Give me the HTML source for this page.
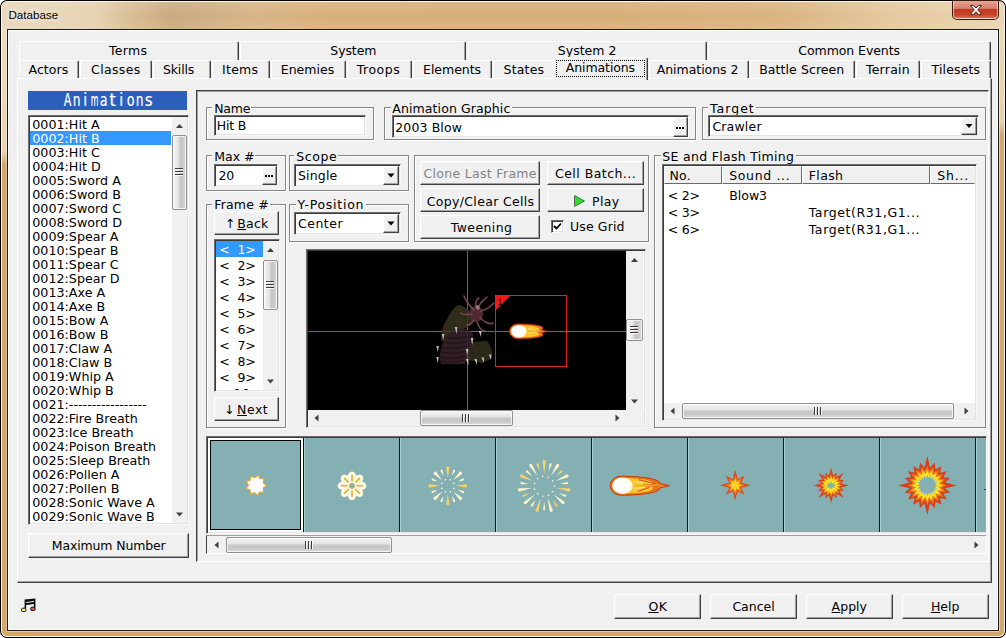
<!DOCTYPE html><html><head><meta charset="utf-8"><title>Database</title><style>
*{box-sizing:border-box;margin:0;padding:0}
html,body{width:1006px;height:638px;overflow:hidden;background:#fff}
body{font-family:"DejaVu Sans","Liberation Sans",sans-serif;font-size:12.5px;color:#000;position:relative}
.a{position:absolute}
.t{position:absolute;white-space:pre;line-height:16px;height:16px}
.btn{position:absolute;background:#f0f0f0;border:1px solid;border-color:#fff #404040 #404040 #fff;box-shadow:inset -1px -1px 0 #a0a0a0,inset 1px 1px 0 #f4f4f4}
.sunk{position:absolute;background:#fff;border:1px solid;border-color:#6e6e6e #f8f8f8 #f8f8f8 #6e6e6e;box-shadow:inset 1px 1px 0 #3a3a3a,inset -1px -1px 0 #e3e3e3}
.grp{position:absolute;border:1px solid #868686;box-shadow:1px 1px 0 #fff,inset 1px 1px 0 #fff}
.gl{position:absolute;background:#f0f0f0;height:12px}
.sb{position:absolute;background:#f0f0f0}
.thumbv{position:absolute;border:1px solid #8f8f8f;border-radius:2px;background:linear-gradient(90deg,#f5f5f5 0%,#e4e4e4 40%,#c6c6c6 55%,#c9c9c9 75%,#dcdcdc 100%);box-shadow:inset 0 0 0 1px rgba(255,255,255,.7)}
.thumbh{position:absolute;border:1px solid #8f8f8f;border-radius:2px;background:linear-gradient(180deg,#f5f5f5 0%,#e4e4e4 40%,#c6c6c6 55%,#c9c9c9 75%,#dcdcdc 100%);box-shadow:inset 0 0 0 1px rgba(255,255,255,.7)}
u{text-decoration:underline;text-underline-offset:1px}
</style></head><body>
<div class="a" style="left:0px;top:0px;width:1006px;height:638px;background:#000;border-radius:7px"></div>
<div class="a" style="left:1px;top:1px;width:1004px;height:636px;border-radius:6px;background:#fff6e8"></div>
<div class="a" style="left:2px;top:2px;width:1002px;height:634px;border-radius:5px;background:#d4a66a"></div>
<div class="a" style="left:2px;top:2px;width:1002px;height:28px;border-radius:5px 5px 0 0;background:linear-gradient(90deg,#e9d8bd 0%,#e7d3b4 9%,#d9be96 13%,#cbab80 17%,#d2b085 21%,#d9b689 25%,#d9b07a 33%,#d8af79 60%,#dbb582 78%,#e4c89f 88%,#e8d0ab 95%,#ebd6b6 100%)"></div>
<div class="a" style="left:2px;top:2px;width:1002px;height:28px;border-radius:5px 5px 0 0;background:linear-gradient(180deg,rgba(255,255,255,.10) 0%,rgba(255,255,255,.0) 45%,rgba(255,255,255,0) 60%,rgba(255,240,220,.10) 100%)"></div>
<div class="a" style="left:2px;top:30px;width:5px;height:135px;background:linear-gradient(180deg,#ecdcc2 0%,#e9d4b6 90%,#d4a66a 100%)"></div>
<div class="a" style="left:999px;top:30px;width:5px;height:105px;background:linear-gradient(180deg,#ecd8b8 0%,#e8d0ac 88%,#d4a66a 100%)"></div>
<div class="a" style="left:6px;top:30px;width:1px;height:601px;background:rgba(255,255,255,.35)"></div>
<div class="a" style="left:999px;top:30px;width:1px;height:601px;background:rgba(255,255,255,.45)"></div>
<div class="a" style="left:7px;top:631px;width:992px;height:1px;background:rgba(255,255,255,.45)"></div>
<div class="a" style="left:7px;top:29px;width:992px;height:602px;background:#1a1a1a"></div>
<div class="a" style="left:8px;top:30px;width:990px;height:600px;background:#f0f0f0;border:1px solid #fff"></div>
<div class="t" style="left:8.5px;top:7px;font-family:'Liberation Sans',sans-serif;font-size:11.6px;text-shadow:0 0 5px rgba(255,255,255,.9),0 0 8px rgba(255,255,255,.7)">Database</div>
<div class="a" style="left:952px;top:0px;width:47px;height:20px;background:#3a1a10;border-radius:0 0 5px 5px"></div>
<div class="a" style="left:953px;top:1px;width:45px;height:18px;border-radius:0 0 4px 4px;border:1px solid rgba(255,255,255,.55);border-top:none;background:linear-gradient(180deg,#e6a695 0%,#d8796a 45%,#c3391d 50%,#c8452a 80%,#d9694a 100%)"></div>
<svg class="a" style="left:968px;top:4px" width="16" height="12" viewBox="0 0 16 12"><path d="M2.5 1.5 L5.5 1.5 L8 4 L10.5 1.5 L13.5 1.5 L9.7 5.8 L13.7 10.5 L10.5 10.5 L8 7.7 L5.5 10.5 L2.3 10.5 L6.3 5.8 Z" fill="#fff" stroke="#5a2a20" stroke-width="1" stroke-linejoin="round"/></svg>
<div class="a" style="left:19px;top:41px;width:220px;height:19px;border-top:1px solid #fff;border-left:1px solid #fff;border-right:1px solid #404040;box-shadow:inset -1px 0 0 #a0a0a0;border-radius:2px 2px 0 0;"></div>
<div class="t" style="left:109.1px;top:43px;letter-spacing:0.26px;">Terms</div>
<div class="a" style="left:240px;top:41px;width:226px;height:19px;border-top:1px solid #fff;border-left:1px solid #fff;border-right:1px solid #404040;box-shadow:inset -1px 0 0 #a0a0a0;border-radius:2px 2px 0 0;"></div>
<div class="t" style="left:330.3px;top:43px;letter-spacing:-0.09px;">System</div>
<div class="a" style="left:468px;top:41px;width:239px;height:19px;border-top:1px solid #fff;border-left:1px solid #fff;border-right:1px solid #404040;box-shadow:inset -1px 0 0 #a0a0a0;border-radius:2px 2px 0 0;"></div>
<div class="t" style="left:557.8px;top:43px;">System 2</div>
<div class="a" style="left:708px;top:41px;width:283px;height:19px;border-top:1px solid #fff;border-left:1px solid #fff;border-right:1px solid #404040;box-shadow:inset -1px 0 0 #a0a0a0;border-radius:2px 2px 0 0;"></div>
<div class="t" style="left:798.3px;top:43px;letter-spacing:-0.07px;">Common Events</div>
<div class="a" style="left:19px;top:60px;width:60px;height:19px;border-top:1px solid #fff;border-left:1px solid #fff;border-right:1px solid #404040;box-shadow:inset -1px 0 0 #a0a0a0;border-radius:2px 2px 0 0;"></div>
<div class="t" style="left:28.5px;top:62px;letter-spacing:0.07px;">Actors</div>
<div class="a" style="left:80px;top:60px;width:72px;height:19px;border-top:1px solid #fff;border-left:1px solid #fff;border-right:1px solid #404040;box-shadow:inset -1px 0 0 #a0a0a0;border-radius:2px 2px 0 0;"></div>
<div class="t" style="left:91.1px;top:62px;letter-spacing:0.33px;">Classes</div>
<div class="a" style="left:153px;top:60px;width:58px;height:19px;border-top:1px solid #fff;border-left:1px solid #fff;border-right:1px solid #404040;box-shadow:inset -1px 0 0 #a0a0a0;border-radius:2px 2px 0 0;"></div>
<div class="t" style="left:163.0px;top:62px;letter-spacing:-0.17px;">Skills</div>
<div class="a" style="left:212px;top:60px;width:58px;height:19px;border-top:1px solid #fff;border-left:1px solid #fff;border-right:1px solid #404040;box-shadow:inset -1px 0 0 #a0a0a0;border-radius:2px 2px 0 0;"></div>
<div class="t" style="left:222.1px;top:62px;letter-spacing:0.23px;">Items</div>
<div class="a" style="left:271px;top:60px;width:75px;height:19px;border-top:1px solid #fff;border-left:1px solid #fff;border-right:1px solid #404040;box-shadow:inset -1px 0 0 #a0a0a0;border-radius:2px 2px 0 0;"></div>
<div class="t" style="left:280.7px;top:62px;letter-spacing:0.05px;">Enemies</div>
<div class="a" style="left:347px;top:60px;width:65px;height:19px;border-top:1px solid #fff;border-left:1px solid #fff;border-right:1px solid #404040;box-shadow:inset -1px 0 0 #a0a0a0;border-radius:2px 2px 0 0;"></div>
<div class="t" style="left:356.7px;top:62px;letter-spacing:0.52px;">Troops</div>
<div class="a" style="left:413px;top:60px;width:79px;height:19px;border-top:1px solid #fff;border-left:1px solid #fff;border-right:1px solid #404040;box-shadow:inset -1px 0 0 #a0a0a0;border-radius:2px 2px 0 0;"></div>
<div class="t" style="left:423.0px;top:62px;letter-spacing:-0.02px;">Elements</div>
<div class="a" style="left:493px;top:60px;width:61px;height:19px;border-top:1px solid #fff;border-left:1px solid #fff;border-radius:2px 0 0 0"></div>
<div class="t" style="left:503.5px;top:62px;letter-spacing:0.20px;">States</div>
<div class="a" style="left:649px;top:60px;width:100px;height:19px;border-top:1px solid #fff;border-left:1px solid #fff;border-right:1px solid #404040;box-shadow:inset -1px 0 0 #a0a0a0;border-radius:2px 2px 0 0;"></div>
<div class="t" style="left:656.7px;top:62px;letter-spacing:-0.04px;">Animations 2</div>
<div class="a" style="left:750px;top:60px;width:105px;height:19px;border-top:1px solid #fff;border-left:1px solid #fff;border-right:1px solid #404040;box-shadow:inset -1px 0 0 #a0a0a0;border-radius:2px 2px 0 0;"></div>
<div class="t" style="left:759.2px;top:62px;letter-spacing:0.08px;">Battle Screen</div>
<div class="a" style="left:856px;top:60px;width:64px;height:19px;border-top:1px solid #fff;border-left:1px solid #fff;border-right:1px solid #404040;box-shadow:inset -1px 0 0 #a0a0a0;border-radius:2px 2px 0 0;"></div>
<div class="t" style="left:865.9px;top:62px;letter-spacing:0.25px;">Terrain</div>
<div class="a" style="left:921px;top:60px;width:70px;height:19px;border-top:1px solid #fff;border-left:1px solid #fff;border-right:1px solid #404040;box-shadow:inset -1px 0 0 #a0a0a0;border-radius:2px 2px 0 0;"></div>
<div class="t" style="left:931.6px;top:62px;letter-spacing:0.14px;">Tilesets</div>
<div class="a" style="left:17px;top:78px;width:975px;height:505px;border:1px solid;border-color:#fff #404040 #404040 #fff;box-shadow:inset -1px -1px 0 #a0a0a0;background:#f0f0f0"></div>
<div class="a" style="left:553px;top:57px;width:95px;height:23px;background:#f0f0f0;border-top:1px solid #fff;border-left:1px solid #fff;border-right:1px solid #404040;box-shadow:inset -1px 0 0 #a0a0a0;border-radius:2px 2px 0 0;"></div>
<div class="a" style="left:556px;top:60px;width:89px;height:17px;border:1px dotted #000"></div>
<div class="t" style="left:565.8px;top:60px;letter-spacing:-0.10px;">Animations</div>
<div class="a" style="left:28px;top:91px;width:159px;height:19px;background:#2b5fbb"></div>
<div class="a" style="left:62.5px;top:89px;width:90px;height:22px;line-height:22px;white-space:nowrap;color:#fff;font-size:13px;text-shadow:.7px .5px 0 rgba(190,205,235,.6)"><span style="display:inline-flex;justify-content:center;width:9px;transform:scale(0.85,1.42)">A</span><span style="display:inline-flex;justify-content:center;width:9px;transform:scale(0.92,1.42)">n</span><span style="display:inline-flex;justify-content:center;width:9px;transform:scale(1.00,1.42)">i</span><span style="display:inline-flex;justify-content:center;width:9px;transform:scale(0.60,1.42)">m</span><span style="display:inline-flex;justify-content:center;width:9px;transform:scale(0.95,1.42)">a</span><span style="display:inline-flex;justify-content:center;width:9px;transform:scale(1.25,1.42)">t</span><span style="display:inline-flex;justify-content:center;width:9px;transform:scale(1.00,1.42)">i</span><span style="display:inline-flex;justify-content:center;width:9px;transform:scale(0.96,1.42)">o</span><span style="display:inline-flex;justify-content:center;width:9px;transform:scale(0.92,1.42)">n</span><span style="display:inline-flex;justify-content:center;width:9px;transform:scale(1.12,1.42)">s</span></div>
<div class="sunk" style="left:28px;top:115px;width:161px;height:410px;"></div>
<div class="t" style="left:32.3px;top:117px;font-size:12.7px;">0001:Hit A</div>
<div class="a" style="left:30px;top:131px;width:141px;height:14px;background:#3399ff"></div>
<div class="t" style="left:32.3px;top:131px;font-size:12.7px;color:#fff">0002:Hit B</div>
<div class="t" style="left:32.3px;top:145px;font-size:12.7px;">0003:Hit C</div>
<div class="t" style="left:32.3px;top:159px;font-size:12.7px;">0004:Hit D</div>
<div class="t" style="left:32.3px;top:173px;font-size:12.7px;">0005:Sword A</div>
<div class="t" style="left:32.3px;top:187px;font-size:12.7px;">0006:Sword B</div>
<div class="t" style="left:32.3px;top:201px;font-size:12.7px;">0007:Sword C</div>
<div class="t" style="left:32.3px;top:215px;font-size:12.7px;">0008:Sword D</div>
<div class="t" style="left:32.3px;top:229px;font-size:12.7px;">0009:Spear A</div>
<div class="t" style="left:32.3px;top:243px;font-size:12.7px;">0010:Spear B</div>
<div class="t" style="left:32.3px;top:257px;font-size:12.7px;">0011:Spear C</div>
<div class="t" style="left:32.3px;top:271px;font-size:12.7px;">0012:Spear D</div>
<div class="t" style="left:32.3px;top:285px;font-size:12.7px;">0013:Axe A</div>
<div class="t" style="left:32.3px;top:299px;font-size:12.7px;">0014:Axe B</div>
<div class="t" style="left:32.3px;top:313px;font-size:12.7px;">0015:Bow A</div>
<div class="t" style="left:32.3px;top:327px;font-size:12.7px;">0016:Bow B</div>
<div class="t" style="left:32.3px;top:341px;font-size:12.7px;">0017:Claw A</div>
<div class="t" style="left:32.3px;top:355px;font-size:12.7px;">0018:Claw B</div>
<div class="t" style="left:32.3px;top:369px;font-size:12.7px;">0019:Whip A</div>
<div class="t" style="left:32.3px;top:383px;font-size:12.7px;">0020:Whip B</div>
<div class="t" style="left:32.3px;top:397px;font-size:12.7px;">0021:-----------------</div>
<div class="t" style="left:32.3px;top:411px;font-size:12.7px;">0022:Fire Breath</div>
<div class="t" style="left:32.3px;top:425px;font-size:12.7px;">0023:Ice Breath</div>
<div class="t" style="left:32.3px;top:439px;font-size:12.7px;">0024:Poison Breath</div>
<div class="t" style="left:32.3px;top:453px;font-size:12.7px;">0025:Sleep Breath</div>
<div class="t" style="left:32.3px;top:467px;font-size:12.7px;">0026:Pollen A</div>
<div class="t" style="left:32.3px;top:481px;font-size:12.7px;">0027:Pollen B</div>
<div class="t" style="left:32.3px;top:495px;font-size:12.7px;">0028:Sonic Wave A</div>
<div class="t" style="left:32.3px;top:509px;font-size:12.7px;">0029:Sonic Wave B</div>
<div class="sb" style="left:172px;top:117px;width:15px;height:406px;"></div>
<svg class="a" style="left:172px;top:117px" width="15" height="17" viewBox="0 0 15 17"><path d="M4.0 11 L7.5 7 L11.0 11 Z" fill="#404040"/></svg>
<svg class="a" style="left:172px;top:506px" width="15" height="17" viewBox="0 0 15 17"><path d="M4.0 6.5 L7.5 10.5 L11.0 6.5 Z" fill="#404040"/></svg>
<div class="thumbv" style="left:172px;top:135px;width:15px;height:75px;"></div>
<div class="a" style="left:175px;top:168px;width:8px;height:8px;background:repeating-linear-gradient(180deg,#3a3a3a 0,#3a3a3a 1px,rgba(255,255,255,.8) 1px,rgba(255,255,255,.8) 2px,transparent 2px,transparent 3px)"></div>
<div class="btn" style="left:28px;top:533px;width:161px;height:25px;"></div>
<div class="t" style="left:51.8px;top:538px;letter-spacing:-0.14px;">Maximum Number</div>
<div class="a" style="left:196px;top:90px;width:793px;height:472px;border:1px solid;border-color:#404040 #fff #fff #404040;box-shadow:inset 1px 1px 0 #a0a0a0"></div>
<div class="grp" style="left:206px;top:107px;width:168px;height:33px;"></div>
<div class="gl" style="left:212px;top:103px;width:39px;height:12px;"></div>
<div class="t" style="left:214.2px;top:101px;letter-spacing:-0.24px;">Name</div>
<div class="sunk" style="left:214px;top:115px;width:152px;height:21px;"></div>
<div class="t" style="left:216.7px;top:118px;letter-spacing:-0.14px;">Hit B</div>
<div class="grp" style="left:384px;top:107px;width:312px;height:33px;"></div>
<div class="gl" style="left:391px;top:103px;width:121px;height:12px;"></div>
<div class="t" style="left:392.3px;top:101px;letter-spacing:0.10px;">Animation Graphic</div>
<div class="sunk" style="left:392px;top:115px;width:297px;height:23px;"></div>
<div class="t" style="left:395.3px;top:120px;letter-spacing:0.11px;">2003 Blow</div>
<div class="btn" style="left:673px;top:117px;width:15px;height:20px;"></div>
<div class="a" style="left:676px;top:127px;width:2px;height:2px;background:#000"></div>
<div class="a" style="left:679px;top:127px;width:2px;height:2px;background:#000"></div>
<div class="a" style="left:682px;top:127px;width:2px;height:2px;background:#000"></div>
<div class="grp" style="left:702px;top:107px;width:284px;height:33px;"></div>
<div class="gl" style="left:708px;top:103px;width:48px;height:12px;"></div>
<div class="t" style="left:709.9px;top:101px;letter-spacing:1.04px;">Target</div>
<div class="sunk" style="left:708px;top:115px;width:271px;height:22px;"></div>
<div class="t" style="left:712.4px;top:119px;letter-spacing:0.18px;">Crawler</div>
<div class="btn" style="left:961px;top:117px;width:16px;height:18px;"></div>
<svg class="a" style="left:961px;top:117px" width="16" height="18"><path d="M4.5 7.0 L11.5 7.0 L8.0 11.0 Z" fill="#000"/></svg>
<div class="grp" style="left:206px;top:155px;width:80px;height:36px;"></div>
<div class="gl" style="left:212px;top:151px;width:43px;height:12px;"></div>
<div class="t" style="left:214.2px;top:149px;letter-spacing:0.02px;">Max #</div>
<div class="sunk" style="left:214px;top:164px;width:64px;height:23px;"></div>
<div class="t" style="left:218.5px;top:168px;letter-spacing:-0.30px;">20</div>
<div class="btn" style="left:262px;top:166px;width:15px;height:19px;"></div>
<div class="a" style="left:265px;top:175px;width:2px;height:2px;background:#000"></div>
<div class="a" style="left:268px;top:175px;width:2px;height:2px;background:#000"></div>
<div class="a" style="left:271px;top:175px;width:2px;height:2px;background:#000"></div>
<div class="grp" style="left:289px;top:155px;width:120px;height:36px;"></div>
<div class="gl" style="left:294px;top:151px;width:44px;height:12px;"></div>
<div class="t" style="left:296.2px;top:149px;letter-spacing:0.62px;">Scope</div>
<div class="sunk" style="left:294px;top:164px;width:107px;height:23px;"></div>
<div class="t" style="left:298.0px;top:168px;letter-spacing:0.16px;">Single</div>
<div class="btn" style="left:383px;top:166px;width:16px;height:19px;"></div>
<svg class="a" style="left:383px;top:166px" width="16" height="19"><path d="M4.5 7.5 L11.5 7.5 L8.0 11.5 Z" fill="#000"/></svg>
<div class="grp" style="left:206px;top:204px;width:80px;height:224px;"></div>
<div class="gl" style="left:212px;top:200px;width:58px;height:12px;"></div>
<div class="t" style="left:214.2px;top:197px;letter-spacing:0.19px;">Frame #</div>
<div class="btn" style="left:214px;top:211px;width:65px;height:24px;"></div>
<div class="t" style="left:224.7px;top:216px;letter-spacing:-3.17px;">↑</div>
<div class="t" style="left:237.3px;top:216px;letter-spacing:0.19px;"><u>B</u>ack</div>
<div class="sunk" style="left:214px;top:239px;width:66px;height:153px;"></div>
<div class="a" style="left:216px;top:241px;width:47px;height:16px;background:#3399ff"></div>
<div class="t" style="left:219.2px;top:242px;letter-spacing:-0.07px;color:#fff">&lt;  1&gt;</div>
<div class="t" style="left:219.2px;top:258px;letter-spacing:-0.07px;">&lt;  2&gt;</div>
<div class="t" style="left:219.2px;top:274px;letter-spacing:-0.07px;">&lt;  3&gt;</div>
<div class="t" style="left:219.2px;top:290px;letter-spacing:-0.07px;">&lt;  4&gt;</div>
<div class="t" style="left:219.2px;top:306px;letter-spacing:-0.07px;">&lt;  5&gt;</div>
<div class="t" style="left:219.2px;top:322px;letter-spacing:-0.07px;">&lt;  6&gt;</div>
<div class="t" style="left:219.2px;top:338px;letter-spacing:-0.07px;">&lt;  7&gt;</div>
<div class="t" style="left:219.2px;top:354px;letter-spacing:-0.07px;">&lt;  8&gt;</div>
<div class="t" style="left:219.2px;top:370px;letter-spacing:-0.07px;">&lt;  9&gt;</div>
<div class="a" style="left:216px;top:385px;width:47px;height:5px;overflow:hidden"><div class="t" style="left:2.6px;top:1px;letter-spacing:0.3px">&lt; 10&gt;</div></div>
<div class="sb" style="left:263px;top:241px;width:15px;height:149px;"></div>
<svg class="a" style="left:263px;top:241px" width="15" height="17" viewBox="0 0 15 17"><path d="M4.0 11 L7.5 7 L11.0 11 Z" fill="#404040"/></svg>
<svg class="a" style="left:263px;top:373px" width="15" height="17" viewBox="0 0 15 17"><path d="M4.0 6.5 L7.5 10.5 L11.0 6.5 Z" fill="#404040"/></svg>
<div class="thumbv" style="left:263px;top:260px;width:15px;height:50px;"></div>
<div class="a" style="left:266px;top:281px;width:8px;height:8px;background:repeating-linear-gradient(180deg,#3a3a3a 0,#3a3a3a 1px,rgba(255,255,255,.8) 1px,rgba(255,255,255,.8) 2px,transparent 2px,transparent 3px)"></div>
<div class="btn" style="left:214px;top:397px;width:65px;height:24px;"></div>
<div class="t" style="left:223.9px;top:402px;letter-spacing:-0.67px;">↓</div>
<div class="t" style="left:237.1px;top:402px;letter-spacing:0.50px;"><u>N</u>ext</div>
<div class="grp" style="left:289px;top:204px;width:120px;height:38px;"></div>
<div class="gl" style="left:296px;top:200px;width:70px;height:12px;"></div>
<div class="t" style="left:297.5px;top:197px;letter-spacing:0.74px;">Y-Position</div>
<div class="sunk" style="left:294px;top:212px;width:107px;height:23px;"></div>
<div class="t" style="left:298.0px;top:216px;letter-spacing:0.50px;">Center</div>
<div class="btn" style="left:383px;top:214px;width:16px;height:19px;"></div>
<svg class="a" style="left:383px;top:214px" width="16" height="19"><path d="M4.5 7.5 L11.5 7.5 L8.0 11.5 Z" fill="#000"/></svg>
<div class="grp" style="left:414px;top:155px;width:235px;height:87px;"></div>
<div class="btn" style="left:420px;top:161px;width:120px;height:24px;"></div>
<div class="t" style="left:423.5px;top:166px;letter-spacing:0.31px;color:#838383">Clone Last Frame</div>
<div class="btn" style="left:420px;top:188px;width:120px;height:24px;"></div>
<div class="t" style="left:426.8px;top:194px;letter-spacing:0.32px;">Copy/Clear Cells</div>
<div class="btn" style="left:420px;top:215px;width:120px;height:24px;"></div>
<div class="t" style="left:450.7px;top:220px;letter-spacing:0.41px;">Tweening</div>
<div class="btn" style="left:547px;top:161px;width:97px;height:24px;"></div>
<div class="t" style="left:555.0px;top:166px;letter-spacing:0.46px;">Cell Batch...</div>
<div class="btn" style="left:547px;top:188px;width:97px;height:24px;"></div>
<div class="t" style="left:592.1px;top:194px;letter-spacing:0.31px;">Play</div>
<svg class="a" style="left:573px;top:194px" width="14" height="14"><path d="M1.5 1.5 L11.5 7 L1.5 12.5 Z" fill="#28e028" stroke="#5a6a5a" stroke-width="1"/></svg>
<div class="sunk" style="left:551px;top:220px;width:13px;height:13px;"></div>
<svg class="a" style="left:551px;top:220px" width="13" height="13"><path d="M3 6 L5.5 8.5 L10 3.5" fill="none" stroke="#000" stroke-width="1.8"/></svg>
<div class="t" style="left:570.1px;top:219px;letter-spacing:0.11px;">Use Grid</div>
<div class="grp" style="left:654px;top:155px;width:332px;height:273px;"></div>
<div class="gl" style="left:661px;top:151px;width:135px;height:12px;"></div>
<div class="t" style="left:662.3px;top:149px;letter-spacing:0.30px;">SE and Flash Timing</div>
<div class="sunk" style="left:662px;top:164px;width:315px;height:257px;"></div>
<div class="a" style="left:664px;top:166px;width:58px;height:18px;background:#f0f0f0;border:1px solid;border-color:#fff #696969 #696969 #fff"></div>
<div class="a" style="left:722px;top:166px;width:80px;height:18px;background:#f0f0f0;border:1px solid;border-color:#fff #696969 #696969 #fff"></div>
<div class="a" style="left:802px;top:166px;width:128px;height:18px;background:#f0f0f0;border:1px solid;border-color:#fff #696969 #696969 #fff"></div>
<div class="a" style="left:930px;top:166px;width:45px;height:18px;background:#f0f0f0;border:1px solid;border-color:#fff #f0f0f0 #696969 #fff"></div>
<div class="t" style="left:669.4px;top:168px;letter-spacing:0.25px;">No.</div>
<div class="t" style="left:729.2px;top:168px;letter-spacing:0.65px;">Sound ...</div>
<div class="t" style="left:808.7px;top:168px;letter-spacing:0.39px;">Flash</div>
<div class="t" style="left:937.3px;top:168px;letter-spacing:0.76px;">Sh...</div>
<div class="t" style="left:667.8px;top:188px;letter-spacing:-0.24px;">&lt; 2&gt;</div>
<div class="t" style="left:729.2px;top:188px;">Blow3</div>
<div class="t" style="left:667.8px;top:205px;letter-spacing:-0.24px;">&lt; 3&gt;</div>
<div class="t" style="left:808.7px;top:205px;letter-spacing:0.61px;">Target(R31,G1...</div>
<div class="t" style="left:667.8px;top:222px;letter-spacing:-0.24px;">&lt; 6&gt;</div>
<div class="t" style="left:808.7px;top:222px;letter-spacing:0.61px;">Target(R31,G1...</div>
<div class="sb" style="left:664px;top:403px;width:311px;height:16px;"></div>
<svg class="a" style="left:664px;top:403px" width="17" height="16" viewBox="0 0 17 16"><path d="M10.5 4.5 L6.5 8.0 L10.5 11.5 Z" fill="#404040"/></svg>
<svg class="a" style="left:958px;top:403px" width="17" height="16" viewBox="0 0 17 16"><path d="M6.5 4.5 L10.5 8.0 L6.5 11.5 Z" fill="#404040"/></svg>
<div class="thumbh" style="left:682px;top:403px;width:272px;height:16px;"></div>
<div class="a" style="left:814px;top:407px;width:8px;height:8px;background:repeating-linear-gradient(90deg,#3a3a3a 0,#3a3a3a 1px,rgba(255,255,255,.8) 1px,rgba(255,255,255,.8) 2px,transparent 2px,transparent 3px)"></div>
<div class="sunk" style="left:306px;top:249px;width:340px;height:179px;"></div>
<div class="a" style="left:308px;top:251px;width:318px;height:159px;background:#000"></div>
<div class="a" style="left:308px;top:331px;width:318px;height:1px;background:#1f9a2a"></div>
<div class="a" style="left:467px;top:251px;width:1px;height:159px;background:#1f9a2a"></div>
<svg class="a" style="left:308px;top:251px" width="318" height="158" viewBox="308 251 318 158">
<g opacity=".88">
<path d="M458 305 C466 306 473 312 473 320 C472 327 462 329 455 333 C450 337 446 341 442 342 C440 336 443 325 447 319 C450 313 453 308 458 305Z" fill="#37331e"/>
<path d="M468 342 L487 341 C492 347 494 355 491 359 L482 363 L468 360Z" fill="#332f1c"/>
<path d="M456 329 C462 327 470 330 473 334 C474 343 468 352 465 364 L441 364 C438 356 441 346 445 339 C448 334 452 331 456 329Z" fill="#38222c"/>
<path d="M443.0 337 Q455 340 470.0 336" stroke="#21141a" stroke-width="1" fill="none"/>
<path d="M442.2 342 Q455 345 468.8 341" stroke="#21141a" stroke-width="1" fill="none"/>
<path d="M441.5 347 Q455 350 467.5 346" stroke="#21141a" stroke-width="1" fill="none"/>
<path d="M440.8 352 Q455 355 466.2 351" stroke="#21141a" stroke-width="1" fill="none"/>
<path d="M440.0 357 Q455 360 465.0 356" stroke="#21141a" stroke-width="1" fill="none"/>
<path d="M439.4 361 Q455 364 464.0 360" stroke="#21141a" stroke-width="1" fill="none"/>
<ellipse cx="476" cy="314" rx="7" ry="8" fill="#5a2f3a"/>
<path d="M474 310 C470 306 466 302 464 296" stroke="#87505a" stroke-width="1.6" fill="none" stroke-linecap="round"/>
<path d="M478 308 C480 302 484 300 487 297" stroke="#87505a" stroke-width="1.6" fill="none" stroke-linecap="round"/>
<path d="M481 311 C486 310 490 307 494 303" stroke="#87505a" stroke-width="1.6" fill="none" stroke-linecap="round"/>
<path d="M480 318 C485 322 489 325 493 323" stroke="#87505a" stroke-width="1.6" fill="none" stroke-linecap="round"/>
<path d="M472 314 C468 314 464 316 461 313" stroke="#87505a" stroke-width="1.6" fill="none" stroke-linecap="round"/>
<path d="M474 320 C471 324 469 326 467 325" stroke="#87505a" stroke-width="1.6" fill="none" stroke-linecap="round"/>
<path d="M477 322 C479 328 482 331 485 331" stroke="#87505a" stroke-width="1.6" fill="none" stroke-linecap="round"/>
<path d="M476 306 C475 302 477 299 479 298" stroke="#87505a" stroke-width="1.6" fill="none" stroke-linecap="round"/>
<path d="M475 306 L478.5 305 L480 308.5 L477.5 310 Z" fill="#a89088"/>
<path d="M454.8 327 L457.4 327 L456.5 334 Z" fill="#d9d5c8"/>
<path d="M441.8 334 L444.4 334 L443.2 340 Z" fill="#d9d5c8"/>
<path d="M436.3 346 L438.9 346 L437.8 352 Z" fill="#d9d5c8"/>
<path d="M436.3 357 L438.9 357 L437.8 363 Z" fill="#d9d5c8"/>
<path d="M465.8 349 L468.4 349 L467.3 355.5 Z" fill="#d9d5c8"/>
<path d="M465.8 359 L468.4 359 L468.5 366 Z" fill="#d9d5c8"/>
<path d="M474.3 359 L476.9 359 L477.0 365 Z" fill="#d9d5c8"/>
<path d="M481.3 357.5 L483.9 357.5 L484.0 363.0 Z" fill="#d9d5c8"/>
<path d="M488.8 354.5 L491.4 354.5 L491 360.0 Z" fill="#d9d5c8"/>
<path d="M478.8 331 L481.4 331 L481 337 Z" fill="#d9d5c8"/>
<path d="M470.8 338 L473.4 338 L472.2 345 Z" fill="#d9d5c8"/>
</g>
<rect x="495.5" y="295.5" width="71" height="71" fill="none" stroke="#e02222" stroke-width="1"/>
<path d="M496 296 L510 296 L496 310 Z" fill="#f01818"/>
<text x="497.3" y="304.8" font-family="Liberation Sans, sans-serif" font-size="9.5" fill="#3a0808">1</text>
<path d="M518.2 323.90000000000003 C535.8000000000001 324.3 547.24 325.97200000000004 541.5 329.90000000000003 L547.5 331.3 L541.5 332.7 C547.24 336.85 535.8000000000001 338.3 518.2 338.7 A8.8 7.4 0 0 1 518.2 323.90000000000003Z" fill="#e8731c" stroke="#c23a12" stroke-width=".8"/><path d="M519.2 325.3 C534.9200000000001 325.40000000000003 544.6 327.6 536.5 330.6 L536.5 332.0 C544.6 335.37 534.9200000000001 337.2 519.2 337.3Z" fill="#f8c52c"/><ellipse cx="518.8000000000001" cy="331.3" rx="7.800000000000001" ry="6.4" fill="#fff8e4"/><ellipse cx="517.8000000000001" cy="331.0" rx="6.4" ry="5.300000000000001" fill="#fff"/><path d="M528.0 328.7 L539.5 330.52000000000004" stroke="#fbe28a" stroke-width=".8"/><path d="M528.0 333.3 L536.5 331.90000000000003" stroke="#fbe28a" stroke-width=".8"/><path d="M529.0 331.3 L543.5 331.3" stroke="#f49a24" stroke-width=".8"/>
</svg>
<div class="sb" style="left:626px;top:251px;width:17px;height:159px;"></div>
<svg class="a" style="left:626px;top:251px" width="17" height="17" viewBox="0 0 17 17"><path d="M5.0 11 L8.5 7 L12.0 11 Z" fill="#404040"/></svg>
<svg class="a" style="left:626px;top:393px" width="17" height="17" viewBox="0 0 17 17"><path d="M5.0 6.5 L8.5 10.5 L12.0 6.5 Z" fill="#404040"/></svg>
<div class="thumbv" style="left:626px;top:319px;width:17px;height:22px;"></div>
<div class="a" style="left:630px;top:326px;width:8px;height:8px;background:repeating-linear-gradient(180deg,#3a3a3a 0,#3a3a3a 1px,rgba(255,255,255,.8) 1px,rgba(255,255,255,.8) 2px,transparent 2px,transparent 3px)"></div>
<div class="sb" style="left:308px;top:410px;width:318px;height:16px;"></div>
<svg class="a" style="left:308px;top:410px" width="17" height="16" viewBox="0 0 17 16"><path d="M10.5 4.5 L6.5 8.0 L10.5 11.5 Z" fill="#404040"/></svg>
<svg class="a" style="left:609px;top:410px" width="17" height="16" viewBox="0 0 17 16"><path d="M6.5 4.5 L10.5 8.0 L6.5 11.5 Z" fill="#404040"/></svg>
<div class="thumbh" style="left:420px;top:410px;width:93px;height:16px;"></div>
<div class="a" style="left:462px;top:414px;width:8px;height:8px;background:repeating-linear-gradient(90deg,#3a3a3a 0,#3a3a3a 1px,rgba(255,255,255,.8) 1px,rgba(255,255,255,.8) 2px,transparent 2px,transparent 3px)"></div>
<div class="a" style="left:626px;top:410px;width:18px;height:16px;background:#f0f0f0"></div>
<div class="sunk" style="left:206px;top:436px;width:781px;height:98px;"></div>
<div class="a" style="left:208px;top:438px;width:778px;height:94px;background:#84b0b4"></div>
<div class="a" style="left:303px;top:438px;width:1px;height:94px;background:#111"></div>
<div class="a" style="left:304px;top:438px;width:1px;height:94px;background:#a5d0d2"></div>
<div class="a" style="left:399px;top:438px;width:1px;height:94px;background:#111"></div>
<div class="a" style="left:400px;top:438px;width:1px;height:94px;background:#a5d0d2"></div>
<div class="a" style="left:495px;top:438px;width:1px;height:94px;background:#111"></div>
<div class="a" style="left:496px;top:438px;width:1px;height:94px;background:#a5d0d2"></div>
<div class="a" style="left:591px;top:438px;width:1px;height:94px;background:#111"></div>
<div class="a" style="left:592px;top:438px;width:1px;height:94px;background:#a5d0d2"></div>
<div class="a" style="left:687px;top:438px;width:1px;height:94px;background:#111"></div>
<div class="a" style="left:688px;top:438px;width:1px;height:94px;background:#a5d0d2"></div>
<div class="a" style="left:783px;top:438px;width:1px;height:94px;background:#111"></div>
<div class="a" style="left:784px;top:438px;width:1px;height:94px;background:#a5d0d2"></div>
<div class="a" style="left:879px;top:438px;width:1px;height:94px;background:#111"></div>
<div class="a" style="left:880px;top:438px;width:1px;height:94px;background:#a5d0d2"></div>
<div class="a" style="left:975px;top:438px;width:1px;height:94px;background:#111"></div>
<div class="a" style="left:976px;top:438px;width:1px;height:94px;background:#a5d0d2"></div>
<div class="a" style="left:208px;top:438px;width:95px;height:94px;border:2px solid #fff;box-shadow:inset 0 0 0 1px #000"></div>
<svg class="a" style="left:208px;top:438px" width="778" height="94" viewBox="208 438 778 94">
<polygon points="258.1,475.1 260.0,478.8 264.1,478.8 263.2,482.9 266.4,485.6 263.1,488.1 263.8,492.2 259.6,492.0 257.5,495.6 254.5,492.7 250.6,494.2 250.1,490.0 246.1,488.6 248.4,485.1 246.3,481.5 250.3,480.3 251.0,476.2 254.9,477.8" fill="#fff" stroke="#e3a43a" stroke-width="1.1" stroke-linejoin="round"/>
<ellipse cx="352" cy="477.0" rx="4.3" ry="5.6" transform="rotate(0 352 485.8)" fill="#fffbe2"/><ellipse cx="352" cy="477.0" rx="4.3" ry="5.6" transform="rotate(45 352 485.8)" fill="#fffbe2"/><ellipse cx="352" cy="477.0" rx="4.3" ry="5.6" transform="rotate(90 352 485.8)" fill="#fffbe2"/><ellipse cx="352" cy="477.0" rx="4.3" ry="5.6" transform="rotate(135 352 485.8)" fill="#fffbe2"/><ellipse cx="352" cy="477.0" rx="4.3" ry="5.6" transform="rotate(180 352 485.8)" fill="#fffbe2"/><ellipse cx="352" cy="477.0" rx="4.3" ry="5.6" transform="rotate(225 352 485.8)" fill="#fffbe2"/><ellipse cx="352" cy="477.0" rx="4.3" ry="5.6" transform="rotate(270 352 485.8)" fill="#fffbe2"/><ellipse cx="352" cy="477.0" rx="4.3" ry="5.6" transform="rotate(315 352 485.8)" fill="#fffbe2"/><path d="M352 481.8 L352 475.3" transform="rotate(0 352 485.8)" stroke="#e8a832" stroke-width="1.6" stroke-linecap="round"/><path d="M352 481.8 L352 475.3" transform="rotate(45 352 485.8)" stroke="#e8a832" stroke-width="1.6" stroke-linecap="round"/><path d="M352 481.8 L352 475.3" transform="rotate(90 352 485.8)" stroke="#e8a832" stroke-width="1.6" stroke-linecap="round"/><path d="M352 481.8 L352 475.3" transform="rotate(135 352 485.8)" stroke="#e8a832" stroke-width="1.6" stroke-linecap="round"/><path d="M352 481.8 L352 475.3" transform="rotate(180 352 485.8)" stroke="#e8a832" stroke-width="1.6" stroke-linecap="round"/><path d="M352 481.8 L352 475.3" transform="rotate(225 352 485.8)" stroke="#e8a832" stroke-width="1.6" stroke-linecap="round"/><path d="M352 481.8 L352 475.3" transform="rotate(270 352 485.8)" stroke="#e8a832" stroke-width="1.6" stroke-linecap="round"/><path d="M352 481.8 L352 475.3" transform="rotate(315 352 485.8)" stroke="#e8a832" stroke-width="1.6" stroke-linecap="round"/><circle cx="352" cy="485.8" r="4.6" fill="#fffbe2"/><circle cx="352" cy="485.8" r="2.6" fill="#84b0b4" stroke="#d9a53c" stroke-width=".8"/>
<path d="M447.8 477.8 L449.40000000000003 467.90000000000003 A1.6 1.6 0 0 0 446.2 467.90000000000003Z" transform="rotate(0.0 447.8 485.8)" fill="#f4cf6a"/><path d="M447.8 474.8 L448.90000000000003 469.40000000000003 A1.1 1.1 0 0 0 446.7 469.40000000000003Z" transform="rotate(22.5 447.8 485.8)" fill="#fff6d0"/><circle cx="447.8" cy="479.3" r=".8" fill="#fff6d0" transform="rotate(22.5 447.8 485.8)"/><path d="M447.8 477.8 L449.40000000000003 467.90000000000003 A1.6 1.6 0 0 0 446.2 467.90000000000003Z" transform="rotate(45.0 447.8 485.8)" fill="#fff6d0"/><path d="M447.8 474.8 L448.90000000000003 469.40000000000003 A1.1 1.1 0 0 0 446.7 469.40000000000003Z" transform="rotate(67.5 447.8 485.8)" fill="#fff6d0"/><circle cx="447.8" cy="479.3" r=".8" fill="#fff6d0" transform="rotate(67.5 447.8 485.8)"/><path d="M447.8 477.8 L449.40000000000003 467.90000000000003 A1.6 1.6 0 0 0 446.2 467.90000000000003Z" transform="rotate(90.0 447.8 485.8)" fill="#f4cf6a"/><path d="M447.8 474.8 L448.90000000000003 469.40000000000003 A1.1 1.1 0 0 0 446.7 469.40000000000003Z" transform="rotate(112.5 447.8 485.8)" fill="#fff6d0"/><circle cx="447.8" cy="479.3" r=".8" fill="#fff6d0" transform="rotate(112.5 447.8 485.8)"/><path d="M447.8 477.8 L449.40000000000003 467.90000000000003 A1.6 1.6 0 0 0 446.2 467.90000000000003Z" transform="rotate(135.0 447.8 485.8)" fill="#fff6d0"/><path d="M447.8 474.8 L448.90000000000003 469.40000000000003 A1.1 1.1 0 0 0 446.7 469.40000000000003Z" transform="rotate(157.5 447.8 485.8)" fill="#fff6d0"/><circle cx="447.8" cy="479.3" r=".8" fill="#fff6d0" transform="rotate(157.5 447.8 485.8)"/><path d="M447.8 477.8 L449.40000000000003 467.90000000000003 A1.6 1.6 0 0 0 446.2 467.90000000000003Z" transform="rotate(180.0 447.8 485.8)" fill="#f4cf6a"/><path d="M447.8 474.8 L448.90000000000003 469.40000000000003 A1.1 1.1 0 0 0 446.7 469.40000000000003Z" transform="rotate(202.5 447.8 485.8)" fill="#fff6d0"/><circle cx="447.8" cy="479.3" r=".8" fill="#fff6d0" transform="rotate(202.5 447.8 485.8)"/><path d="M447.8 477.8 L449.40000000000003 467.90000000000003 A1.6 1.6 0 0 0 446.2 467.90000000000003Z" transform="rotate(225.0 447.8 485.8)" fill="#fff6d0"/><path d="M447.8 474.8 L448.90000000000003 469.40000000000003 A1.1 1.1 0 0 0 446.7 469.40000000000003Z" transform="rotate(247.5 447.8 485.8)" fill="#fff6d0"/><circle cx="447.8" cy="479.3" r=".8" fill="#fff6d0" transform="rotate(247.5 447.8 485.8)"/><path d="M447.8 477.8 L449.40000000000003 467.90000000000003 A1.6 1.6 0 0 0 446.2 467.90000000000003Z" transform="rotate(270.0 447.8 485.8)" fill="#f4cf6a"/><path d="M447.8 474.8 L448.90000000000003 469.40000000000003 A1.1 1.1 0 0 0 446.7 469.40000000000003Z" transform="rotate(292.5 447.8 485.8)" fill="#fff6d0"/><circle cx="447.8" cy="479.3" r=".8" fill="#fff6d0" transform="rotate(292.5 447.8 485.8)"/><path d="M447.8 477.8 L449.40000000000003 467.90000000000003 A1.6 1.6 0 0 0 446.2 467.90000000000003Z" transform="rotate(315.0 447.8 485.8)" fill="#fff6d0"/><path d="M447.8 474.8 L448.90000000000003 469.40000000000003 A1.1 1.1 0 0 0 446.7 469.40000000000003Z" transform="rotate(337.5 447.8 485.8)" fill="#fff6d0"/><circle cx="447.8" cy="479.3" r=".8" fill="#fff6d0" transform="rotate(337.5 447.8 485.8)"/>
<path d="M544.2 473.8 L545.8000000000001 461.40000000000003 A1.6 1.6 0 0 0 542.6 461.40000000000003Z" transform="rotate(0.0 544.2 486.3)" fill="#f3d36a"/><path d="M544.2 470.3 L545.3000000000001 463.40000000000003 A1.1 1.1 0 0 0 543.1 463.40000000000003Z" transform="rotate(16.363636363636363 544.2 486.3)" fill="#fff3c4"/><circle cx="544.2" cy="476.3" r=".8" fill="#fff6d0" transform="rotate(24.363636363636363 544.2 486.3)"/><path d="M544.2 473.8 L545.8000000000001 461.40000000000003 A1.6 1.6 0 0 0 542.6 461.40000000000003Z" transform="rotate(32.72727272727273 544.2 486.3)" fill="#fff3c4"/><path d="M544.2 470.3 L545.3000000000001 463.40000000000003 A1.1 1.1 0 0 0 543.1 463.40000000000003Z" transform="rotate(49.09090909090909 544.2 486.3)" fill="#f3d36a"/><circle cx="544.2" cy="476.3" r=".8" fill="#fff6d0" transform="rotate(57.09090909090909 544.2 486.3)"/><path d="M544.2 473.8 L545.8000000000001 461.40000000000003 A1.6 1.6 0 0 0 542.6 461.40000000000003Z" transform="rotate(65.45454545454545 544.2 486.3)" fill="#fff3c4"/><path d="M544.2 470.3 L545.3000000000001 463.40000000000003 A1.1 1.1 0 0 0 543.1 463.40000000000003Z" transform="rotate(81.81818181818181 544.2 486.3)" fill="#fff3c4"/><circle cx="544.2" cy="476.3" r=".8" fill="#fff6d0" transform="rotate(89.81818181818181 544.2 486.3)"/><path d="M544.2 473.8 L545.8000000000001 461.40000000000003 A1.6 1.6 0 0 0 542.6 461.40000000000003Z" transform="rotate(98.18181818181819 544.2 486.3)" fill="#f3d36a"/><path d="M544.2 470.3 L545.3000000000001 463.40000000000003 A1.1 1.1 0 0 0 543.1 463.40000000000003Z" transform="rotate(114.54545454545455 544.2 486.3)" fill="#fff3c4"/><circle cx="544.2" cy="476.3" r=".8" fill="#fff6d0" transform="rotate(122.54545454545455 544.2 486.3)"/><path d="M544.2 473.8 L545.8000000000001 461.40000000000003 A1.6 1.6 0 0 0 542.6 461.40000000000003Z" transform="rotate(130.9090909090909 544.2 486.3)" fill="#fff3c4"/><path d="M544.2 470.3 L545.3000000000001 463.40000000000003 A1.1 1.1 0 0 0 543.1 463.40000000000003Z" transform="rotate(147.27272727272728 544.2 486.3)" fill="#f3d36a"/><circle cx="544.2" cy="476.3" r=".8" fill="#fff6d0" transform="rotate(155.27272727272728 544.2 486.3)"/><path d="M544.2 473.8 L545.8000000000001 461.40000000000003 A1.6 1.6 0 0 0 542.6 461.40000000000003Z" transform="rotate(163.63636363636363 544.2 486.3)" fill="#fff3c4"/><path d="M544.2 470.3 L545.3000000000001 463.40000000000003 A1.1 1.1 0 0 0 543.1 463.40000000000003Z" transform="rotate(180.0 544.2 486.3)" fill="#fff3c4"/><circle cx="544.2" cy="476.3" r=".8" fill="#fff6d0" transform="rotate(188.0 544.2 486.3)"/><path d="M544.2 473.8 L545.8000000000001 461.40000000000003 A1.6 1.6 0 0 0 542.6 461.40000000000003Z" transform="rotate(196.36363636363637 544.2 486.3)" fill="#f3d36a"/><path d="M544.2 470.3 L545.3000000000001 463.40000000000003 A1.1 1.1 0 0 0 543.1 463.40000000000003Z" transform="rotate(212.72727272727272 544.2 486.3)" fill="#fff3c4"/><circle cx="544.2" cy="476.3" r=".8" fill="#fff6d0" transform="rotate(220.72727272727272 544.2 486.3)"/><path d="M544.2 473.8 L545.8000000000001 461.40000000000003 A1.6 1.6 0 0 0 542.6 461.40000000000003Z" transform="rotate(229.0909090909091 544.2 486.3)" fill="#fff3c4"/><path d="M544.2 470.3 L545.3000000000001 463.40000000000003 A1.1 1.1 0 0 0 543.1 463.40000000000003Z" transform="rotate(245.45454545454547 544.2 486.3)" fill="#f3d36a"/><circle cx="544.2" cy="476.3" r=".8" fill="#fff6d0" transform="rotate(253.45454545454547 544.2 486.3)"/><path d="M544.2 473.8 L545.8000000000001 461.40000000000003 A1.6 1.6 0 0 0 542.6 461.40000000000003Z" transform="rotate(261.8181818181818 544.2 486.3)" fill="#fff3c4"/><path d="M544.2 470.3 L545.3000000000001 463.40000000000003 A1.1 1.1 0 0 0 543.1 463.40000000000003Z" transform="rotate(278.1818181818182 544.2 486.3)" fill="#fff3c4"/><circle cx="544.2" cy="476.3" r=".8" fill="#fff6d0" transform="rotate(286.1818181818182 544.2 486.3)"/><path d="M544.2 473.8 L545.8000000000001 461.40000000000003 A1.6 1.6 0 0 0 542.6 461.40000000000003Z" transform="rotate(294.54545454545456 544.2 486.3)" fill="#f3d36a"/><path d="M544.2 470.3 L545.3000000000001 463.40000000000003 A1.1 1.1 0 0 0 543.1 463.40000000000003Z" transform="rotate(310.90909090909093 544.2 486.3)" fill="#fff3c4"/><circle cx="544.2" cy="476.3" r=".8" fill="#fff6d0" transform="rotate(318.90909090909093 544.2 486.3)"/><path d="M544.2 473.8 L545.8000000000001 461.40000000000003 A1.6 1.6 0 0 0 542.6 461.40000000000003Z" transform="rotate(327.27272727272725 544.2 486.3)" fill="#fff3c4"/><path d="M544.2 470.3 L545.3000000000001 463.40000000000003 A1.1 1.1 0 0 0 543.1 463.40000000000003Z" transform="rotate(343.6363636363636 544.2 486.3)" fill="#f3d36a"/><circle cx="544.2" cy="476.3" r=".8" fill="#fff6d0" transform="rotate(351.6363636363636 544.2 486.3)"/>
<path d="M621.5 476.09999999999997 C644.3 476.59999999999997 659.12 478.788 660.5 483.7 L669.5 485.7 L660.5 487.7 C659.12 492.9 644.3 494.8 621.5 495.3 A11.4 9.6 0 0 1 621.5 476.09999999999997Z" fill="#e8731c" stroke="#c23a12" stroke-width="1"/><path d="M623.5 477.9 C643.16 478.09999999999997 655.7 480.9 652.5 484.7 L652.5 486.7 C655.7 490.97999999999996 643.16 493.3 623.5 493.5Z" fill="#f8c52c"/><ellipse cx="622.5" cy="485.7" rx="10.200000000000001" ry="8.299999999999999" fill="#fff8e4"/><ellipse cx="621.0" cy="485.4" rx="8.4" ry="6.8" fill="#fff"/><path d="M633.9 481.9 L657.5 484.56" stroke="#fbe28a" stroke-width="1"/><path d="M633.9 488.5 L653.5 486.53999999999996" stroke="#fbe28a" stroke-width="1"/><path d="M638.9 479.7 L655.5 483.9" stroke="#d8481a" stroke-width="1"/><path d="M637.9 491.3 L649.5 487.38" stroke="#d8481a" stroke-width="1"/><path d="M635.9 485.7 L663.5 485.7" stroke="#f49a24" stroke-width="1"/><path d="M642.9 483.9 L659.5 485.15999999999997" stroke="#ee7a1c" stroke-width="1"/><path d="M644.9 487.2 L657.5 486.15" stroke="#ee7a1c" stroke-width="1"/>
<polygon points="735.2,469.8 737.7,479.3 744.7,475.8 741.2,482.8 750.7,485.3 741.2,487.8 744.7,494.8 737.7,491.3 735.2,500.8 732.7,491.3 725.7,494.8 729.2,487.8 719.7,485.3 729.2,482.8 725.7,475.8 732.7,479.3" fill="#dd4a1c"/>
<polygon points="735.2,475.8 737.2,480.5 741.9,478.6 740.0,483.3 744.7,485.3 740.0,487.3 741.9,492.0 737.2,490.1 735.2,494.8 733.2,490.1 728.5,492.0 730.4,487.3 725.7,485.3 730.4,483.3 728.5,478.6 733.2,480.5" fill="#f0821e"/>
<polygon points="735.2,479.1 736.6,482.0 739.6,480.9 738.5,483.9 741.4,485.3 738.5,486.7 739.6,489.7 736.6,488.6 735.2,491.5 733.8,488.6 730.8,489.7 731.9,486.7 729.0,485.3 731.9,483.9 730.8,480.9 733.8,482.0" fill="#f9d224"/>
<polygon points="831.1,467.4 833.1,475.6 836.5,472.5 836.7,477.1 843.8,472.7 839.4,479.8 844.0,480.0 840.9,483.4 849.1,485.4 840.9,487.4 844.0,490.8 839.4,491.0 843.8,498.1 836.7,493.7 836.5,498.3 833.1,495.2 831.1,503.4 829.1,495.2 825.7,498.3 825.5,493.7 818.4,498.1 822.8,491.0 818.2,490.8 821.3,487.4 813.1,485.4 821.3,483.4 818.2,480.0 822.8,479.8 818.4,472.7 825.5,477.1 825.7,472.5 829.1,475.6" fill="#d8401c"/>
<polygon points="831.1,473.9 832.7,477.6 835.5,474.8 835.5,478.7 839.2,477.3 837.8,481.0 841.7,481.0 838.9,483.8 842.6,485.4 838.9,487.0 841.7,489.8 837.8,489.8 839.2,493.5 835.5,492.1 835.5,496.0 832.7,493.2 831.1,496.9 829.5,493.2 826.7,496.0 826.7,492.1 823.0,493.5 824.4,489.8 820.5,489.8 823.3,487.0 819.6,485.4 823.3,483.8 820.5,481.0 824.4,481.0 823.0,477.3 826.7,478.7 826.7,474.8 829.5,477.6" fill="#f0821e"/>
<polygon points="831.1,476.4 832.3,479.5 834.5,477.1 834.4,480.4 837.5,479.0 836.1,482.1 839.4,482.0 837.0,484.2 840.1,485.4 837.0,486.6 839.4,488.8 836.1,488.7 837.5,491.8 834.4,490.4 834.5,493.7 832.3,491.3 831.1,494.4 829.9,491.3 827.7,493.7 827.8,490.4 824.7,491.8 826.1,488.7 822.8,488.8 825.2,486.6 822.1,485.4 825.2,484.2 822.8,482.0 826.1,482.1 824.7,479.0 827.8,480.4 827.7,477.1 829.9,479.5" fill="#f9e028"/>
<polygon points="831.1,480.8 832.0,483.2 834.4,482.1 833.3,484.5 835.7,485.4 833.3,486.3 834.4,488.7 832.0,487.6 831.1,490.0 830.2,487.6 827.8,488.7 828.9,486.3 826.5,485.4 828.9,484.5 827.8,482.1 830.2,483.2" fill="#84b0b4" transform="translate(831.1 485.4) scale(1.25 .9) translate(-831.1 -485.4)"/>
<polygon points="927.3,455.9 930.1,467.6 934.7,462.6 935.5,469.4 941.4,466.0 940.0,472.7 946.7,471.3 943.3,477.2 950.1,478.0 945.1,482.6 956.8,485.4 945.1,488.2 950.1,492.8 943.3,493.6 946.7,499.5 940.0,498.1 941.4,504.8 935.5,501.4 934.7,508.2 930.1,503.2 927.3,514.9 924.5,503.2 919.9,508.2 919.1,501.4 913.2,504.8 914.6,498.1 907.9,499.5 911.3,493.6 904.5,492.8 909.5,488.2 897.8,485.4 909.5,482.6 904.5,478.0 911.3,477.2 907.9,471.3 914.6,472.7 913.2,466.0 919.1,469.4 919.9,462.6 924.5,467.6" fill="#d5401c"/>
<polygon points="927.3,465.9 929.6,471.1 933.3,466.9 933.9,472.5 938.8,469.6 937.6,475.1 943.1,473.9 940.2,478.8 945.8,479.4 941.6,483.1 946.8,485.4 941.6,487.7 945.8,491.4 940.2,492.0 943.1,496.9 937.6,495.7 938.8,501.2 933.9,498.3 933.3,503.9 929.6,499.7 927.3,504.9 925.0,499.7 921.3,503.9 920.7,498.3 915.8,501.2 917.0,495.7 911.5,496.9 914.4,492.0 908.8,491.4 913.0,487.7 907.8,485.4 913.0,483.1 908.8,479.4 914.4,478.8 911.5,473.9 917.0,475.1 915.8,469.6 920.7,472.5 921.3,466.9 925.0,471.1" fill="#ee7a1c"/>
<polygon points="927.3,469.4 929.1,474.0 932.2,470.2 932.5,475.2 936.7,472.5 935.4,477.3 940.2,476.0 937.5,480.2 942.5,480.5 938.7,483.6 943.3,485.4 938.7,487.2 942.5,490.3 937.5,490.6 940.2,494.8 935.4,493.5 936.7,498.3 932.5,495.6 932.2,500.6 929.1,496.8 927.3,501.4 925.5,496.8 922.4,500.6 922.1,495.6 917.9,498.3 919.2,493.5 914.4,494.8 917.1,490.6 912.1,490.3 915.9,487.2 911.3,485.4 915.9,483.6 912.1,480.5 917.1,480.2 914.4,476.0 919.2,477.3 917.9,472.5 922.1,475.2 922.4,470.2 925.5,474.0" fill="#f9e028"/>
<polygon points="927.3,474.9 928.5,478.0 930.5,475.4 930.7,478.7 933.5,476.9 932.6,480.1 935.8,479.2 934.0,482.0 937.3,482.2 934.7,484.2 937.8,485.4 934.7,486.6 937.3,488.6 934.0,488.8 935.8,491.6 932.6,490.7 933.5,493.9 930.7,492.1 930.5,495.4 928.5,492.8 927.3,495.9 926.1,492.8 924.1,495.4 923.9,492.1 921.1,493.9 922.0,490.7 918.8,491.6 920.6,488.8 917.3,488.6 919.9,486.6 916.8,485.4 919.9,484.2 917.3,482.2 920.6,482.0 918.8,479.2 922.0,480.1 921.1,476.9 923.9,478.7 924.1,475.4 926.1,478.0" fill="#84b0b4"/>
<rect x="984" y="489" width="2" height="1" fill="#333"/>
</svg>
<div class="a" style="left:206px;top:535px;width:781px;height:19px;border:1px solid;border-color:#a0a0a0 #fff #fff #404040"></div>
<div class="sb" style="left:208px;top:537px;width:777px;height:16px;"></div>
<svg class="a" style="left:208px;top:537px" width="17" height="16" viewBox="0 0 17 16"><path d="M10.5 4.5 L6.5 8.0 L10.5 11.5 Z" fill="#404040"/></svg>
<svg class="a" style="left:968px;top:537px" width="17" height="16" viewBox="0 0 17 16"><path d="M6.5 4.5 L10.5 8.0 L6.5 11.5 Z" fill="#404040"/></svg>
<div class="thumbh" style="left:226px;top:537px;width:166px;height:16px;"></div>
<div class="a" style="left:305px;top:541px;width:8px;height:8px;background:repeating-linear-gradient(90deg,#3a3a3a 0,#3a3a3a 1px,rgba(255,255,255,.8) 1px,rgba(255,255,255,.8) 2px,transparent 2px,transparent 3px)"></div>
<div class="btn" style="left:614px;top:594px;width:87px;height:25px;"></div>
<div class="t" style="left:648.4px;top:599px;letter-spacing:0.38px;"><u>O</u>K</div>
<div class="btn" style="left:710px;top:594px;width:87px;height:25px;"></div>
<div class="t" style="left:732.4px;top:599px;">Cancel</div>
<div class="btn" style="left:806px;top:594px;width:87px;height:25px;"></div>
<div class="t" style="left:831.6px;top:599px;letter-spacing:0.02px;"><u>A</u>pply</div>
<div class="btn" style="left:902px;top:594px;width:87px;height:25px;"></div>
<div class="t" style="left:930.9px;top:599px;letter-spacing:0.05px;"><u>H</u>elp</div>
<svg class="a" style="left:20px;top:598px" width="17" height="16" viewBox="0 0 17 16"><path d="M4.6 1.6 L15.4 0.6 V9.8 H13.9 V5.9 L6.1 6.9 V11 H4.6Z M6.1 3.9 V4.9 L13.9 3.9 V2.9Z" fill="#0a0a0a" fill-rule="evenodd"/><rect x="1.5" y="10.2" width="4.4" height="3.3" rx="1.2" fill="#f2ee7a" stroke="#0a0a0a" stroke-width="1"/><rect x="10.7" y="9.2" width="4.4" height="3.3" rx="1.2" fill="#d8604a" stroke="#0a0a0a" stroke-width="1"/></svg>
</body></html>
